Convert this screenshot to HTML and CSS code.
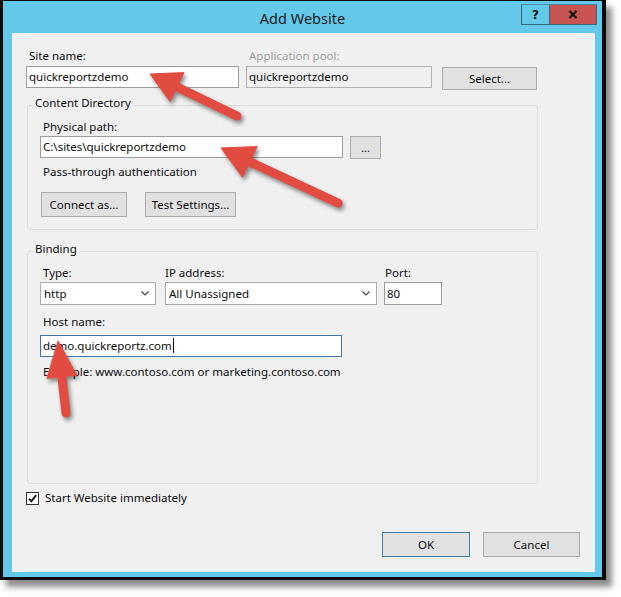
FILE: index.html
```html
<!DOCTYPE html>
<html>
<head>
<meta charset="utf-8">
<title>Add Website</title>
<link rel="stylesheet" href="styles.css">
</head>
<body>
<div class="window">
  <div class="titlebar">
    <div class="title">Add Website</div>
    <div class="caption-buttons">
      <div class="cap-btn help">?</div>
      <div class="cap-btn close">
        <svg width="10" height="9" viewBox="0 0 10 9"><path d="M1.5 1 L8.5 8 M8.5 1 L1.5 8" stroke="#111" stroke-width="2.2" fill="none"/></svg>
      </div>
    </div>
  </div>
  <div class="client">
    <div class="top-row">
      <div class="col-site">
        <div class="label">Site name:</div>
        <div class="textbox top-box">quickreportzdemo</div>
      </div>
      <div class="col-pool">
        <div class="label disabled">Application pool:</div>
        <div class="textbox readonly top-box">quickreportzdemo</div>
      </div>
      <div class="col-select">
        <div class="label">&nbsp;</div>
        <div class="button btn-select">Select...</div>
      </div>
    </div>

    <fieldset class="group content-dir">
      <legend>Content Directory</legend>
      <div class="label">Physical path:</div>
      <div class="path-row">
        <div class="textbox path-box">C:\sites\quickreportzdemo</div>
        <div class="button btn-browse">...</div>
      </div>
      <div class="label pass">Pass-through authentication</div>
      <div class="btn-row">
        <div class="button btn-connect">Connect as...</div>
        <div class="button btn-test">Test Settings...</div>
      </div>
    </fieldset>

    <fieldset class="group binding">
      <legend>Binding</legend>
      <div class="binding-row">
        <div class="col-type">
          <div class="label">Type:</div>
          <div class="select">
            <span>http</span>
            <svg class="chev" width="8" height="5" viewBox="0 0 8 5"><path d="M0.5 0.5 L4 4 L7.5 0.5" stroke="#444" stroke-width="1.2" fill="none"/></svg>
          </div>
        </div>
        <div class="col-ip">
          <div class="label flush">IP address:</div>
          <div class="select">
            <span>All Unassigned</span>
            <svg class="chev" width="8" height="5" viewBox="0 0 8 5"><path d="M0.5 0.5 L4 4 L7.5 0.5" stroke="#444" stroke-width="1.2" fill="none"/></svg>
          </div>
        </div>
        <div class="col-port">
          <div class="label port-label">Port:</div>
          <div class="textbox port-box">80</div>
        </div>
      </div>
      <div class="label host-label">Host name:</div>
      <div class="textbox host-box focused">demo.quickreportz.com<span class="caret"></span></div>
      <div class="label example">Example: www.contoso.com or marketing.contoso.com</div>
    </fieldset>

    <div class="check-row">
      <div class="checkbox">
        <svg width="11" height="11" viewBox="0 0 11 11"><path d="M2 5.6 L4.4 8.2 L9.2 2.2" stroke="#1a1a1a" stroke-width="1.9" fill="none"/></svg>
      </div>
      <span class="check-label">Start Website immediately</span>
    </div>

    <div class="footer">
      <div class="button btn-ok">OK</div>
      <div class="button btn-cancel">Cancel</div>
    </div>
  </div>
</div>

<svg class="arrows" width="621" height="597" viewBox="0 0 621 597">
  <g fill="#e24b40" stroke="#e24b40">
    <line x1="175" y1="86" x2="237" y2="116" stroke-width="9" stroke-linecap="round"/>
    <polygon points="150,74 184,72.6 170,101.5" stroke-width="1" stroke-linejoin="round"/>
    <line x1="247" y1="160.5" x2="338" y2="203" stroke-width="9" stroke-linecap="round"/>
    <polygon points="221,148 257.2,146.5 242.5,177.2" stroke-width="1" stroke-linejoin="round"/>
    <line x1="61.5" y1="374" x2="66" y2="413" stroke-width="9" stroke-linecap="round"/>
    <polygon points="58,341 76.7,375.2 46.9,378.4" stroke-width="1" stroke-linejoin="round"/>
  </g>
</svg>
</body>
</html>
```

FILE: styles.css
```css
* { box-sizing: border-box; }

html, body {
  margin: 0;
  padding: 0;
  background: #ffffff;
}

body {
  position: relative;
  width: 621px;
  height: 597px;
  overflow: hidden;
  font-family: "Noto Sans", "Open Sans", sans-serif;
  font-size: 11.5px;
  color: #0d0d0d;
}

.window {
  width: 606px;
  border: 3px solid #0b0b0b;
  border-top-width: 1px;
  border-right-width: 4px;
  background: #64c8ea;
  box-shadow: 6px 7px 6px rgba(0, 0, 0, 0.45);
}

.titlebar {
  height: 32px;
  display: grid;
  grid-template-columns: 1fr auto 1fr;
  padding: 0 5px;
}

.title {
  grid-column: 2;
  align-self: center;
  font-size: 14.5px;
  line-height: 20px;
  color: #1b1b1b;
  padding-top: 2px;
}

.caption-buttons {
  grid-column: 3;
  justify-self: end;
  align-self: start;
  margin-top: 3px;
  display: flex;
  border: 1px solid #386b82;
  border-top-color: #4b8aa6;
}

.cap-btn {
  height: 19px;
  display: flex;
  align-items: center;
  justify-content: center;
}

.help {
  width: 28px;
  border-right: 1px solid #386b82;
  font-family: "DejaVu Sans", sans-serif;
  font-weight: 700;
  font-size: 12px;
  color: #111;
}

.close {
  width: 46px;
  background: #c75450;
}

.client {
  margin: 0 7px 5px 9px;
  background: #f0f0f0;
  padding: 15px 15px 15px 14px;
}

.label {
  height: 16px;
  line-height: 16px;
  padding-left: 3px;
  white-space: nowrap;
}

.label.disabled { color: #a2a2a2; }
.label.flush { padding-left: 0; }
.label.port-label { padding-left: 1px; }

.textbox {
  height: 22px;
  border: 1px solid #9d9d9d;
  background: #ffffff;
  padding-left: 2px;
  line-height: 20px;
  white-space: nowrap;
  overflow: hidden;
}

.textbox.readonly {
  background: #f0f0f0;
  border-color: #b3b3b3;
}

.textbox.focused { border-color: #3f78a8; }

.caret {
  display: inline-block;
  width: 1px;
  height: 15px;
  background: #000;
  vertical-align: -3px;
  margin-left: 1px;
}

.button {
  height: 23px;
  border: 1px solid #acacac;
  background: #e1e1e1;
  display: flex;
  align-items: center;
  justify-content: center;
  line-height: 16px;
  white-space: nowrap;
}

/* top row */
.top-row {
  display: flex;
  align-items: flex-start;
}
.col-site { width: 213px; margin-right: 7px; }
.col-pool { width: 186px; margin-right: 10px; }
.col-select { width: 95px; }
.top-box { margin-top: 2px; }
.btn-select { margin-top: 3px; }

/* group boxes */
.group {
  margin: 5px 0 0 1px;
  width: 511px;
  min-width: 0;
  border: 1px solid #dcdcdc;
  border-radius: 3px;
  padding: 4px 12px 12px 12px;
}

.group legend {
  margin-left: -7px;
  padding: 0 2px 4px 2px;
  line-height: 16px;
}

.content-dir { margin-top: 5px; }

.path-row {
  display: flex;
  align-items: flex-start;
}
.path-box { width: 303px; margin-top: 1px; }
.btn-browse { width: 31px; margin: 1px 0 0 7px; }

.pass { margin-top: 5px; }

.btn-row {
  display: flex;
  margin-top: 12px;
}
.btn-connect { width: 86px; height: 25px; margin-left: 1px; }
.btn-test { width: 91px; height: 25px; margin-left: 18px; }

.binding {
  margin-top: 11px;
  padding-bottom: 103px;
}

.binding-row {
  display: flex;
  align-items: flex-start;
}
.col-type { width: 116px; margin-right: 9px; }
.col-ip { width: 212px; margin-right: 7px; }
.col-port { width: 58px; }

.select {
  margin-top: 1px;
  height: 23px;
  border: 1px solid #acacac;
  background: #ffffff;
  display: flex;
  align-items: center;
  justify-content: space-between;
  padding: 0 6px 0 3px;
  white-space: nowrap;
}

.chev { display: block; }

.port-box { margin-top: 1px; height: 23px; line-height: 21px; }

.host-label { margin-top: 9px; }
.host-box { width: 302px; margin-top: 5px; }
.example { margin-top: 7px; }

/* checkbox */
.check-row {
  display: flex;
  align-items: center;
  height: 16px;
  margin-top: 6px;
}

.checkbox {
  width: 13px;
  height: 13px;
  border: 1px solid #333;
  background: #ffffff;
  display: flex;
  align-items: center;
  justify-content: center;
}

.check-label {
  margin-left: 6px;
  line-height: 16px;
}

/* footer */
.footer {
  display: flex;
  justify-content: flex-end;
  margin-top: 26px;
}
.btn-ok {
  width: 88px;
  height: 25px;
  border-color: #3c7fb1;
}
.btn-cancel {
  width: 97px;
  height: 25px;
  margin-left: 13px;
}

/* annotation arrows overlay */
.arrows {
  position: absolute;
  left: 0;
  top: 0;
  pointer-events: none;
  filter: drop-shadow(2px 3px 2px rgba(0, 0, 0, 0.45));
}
```
